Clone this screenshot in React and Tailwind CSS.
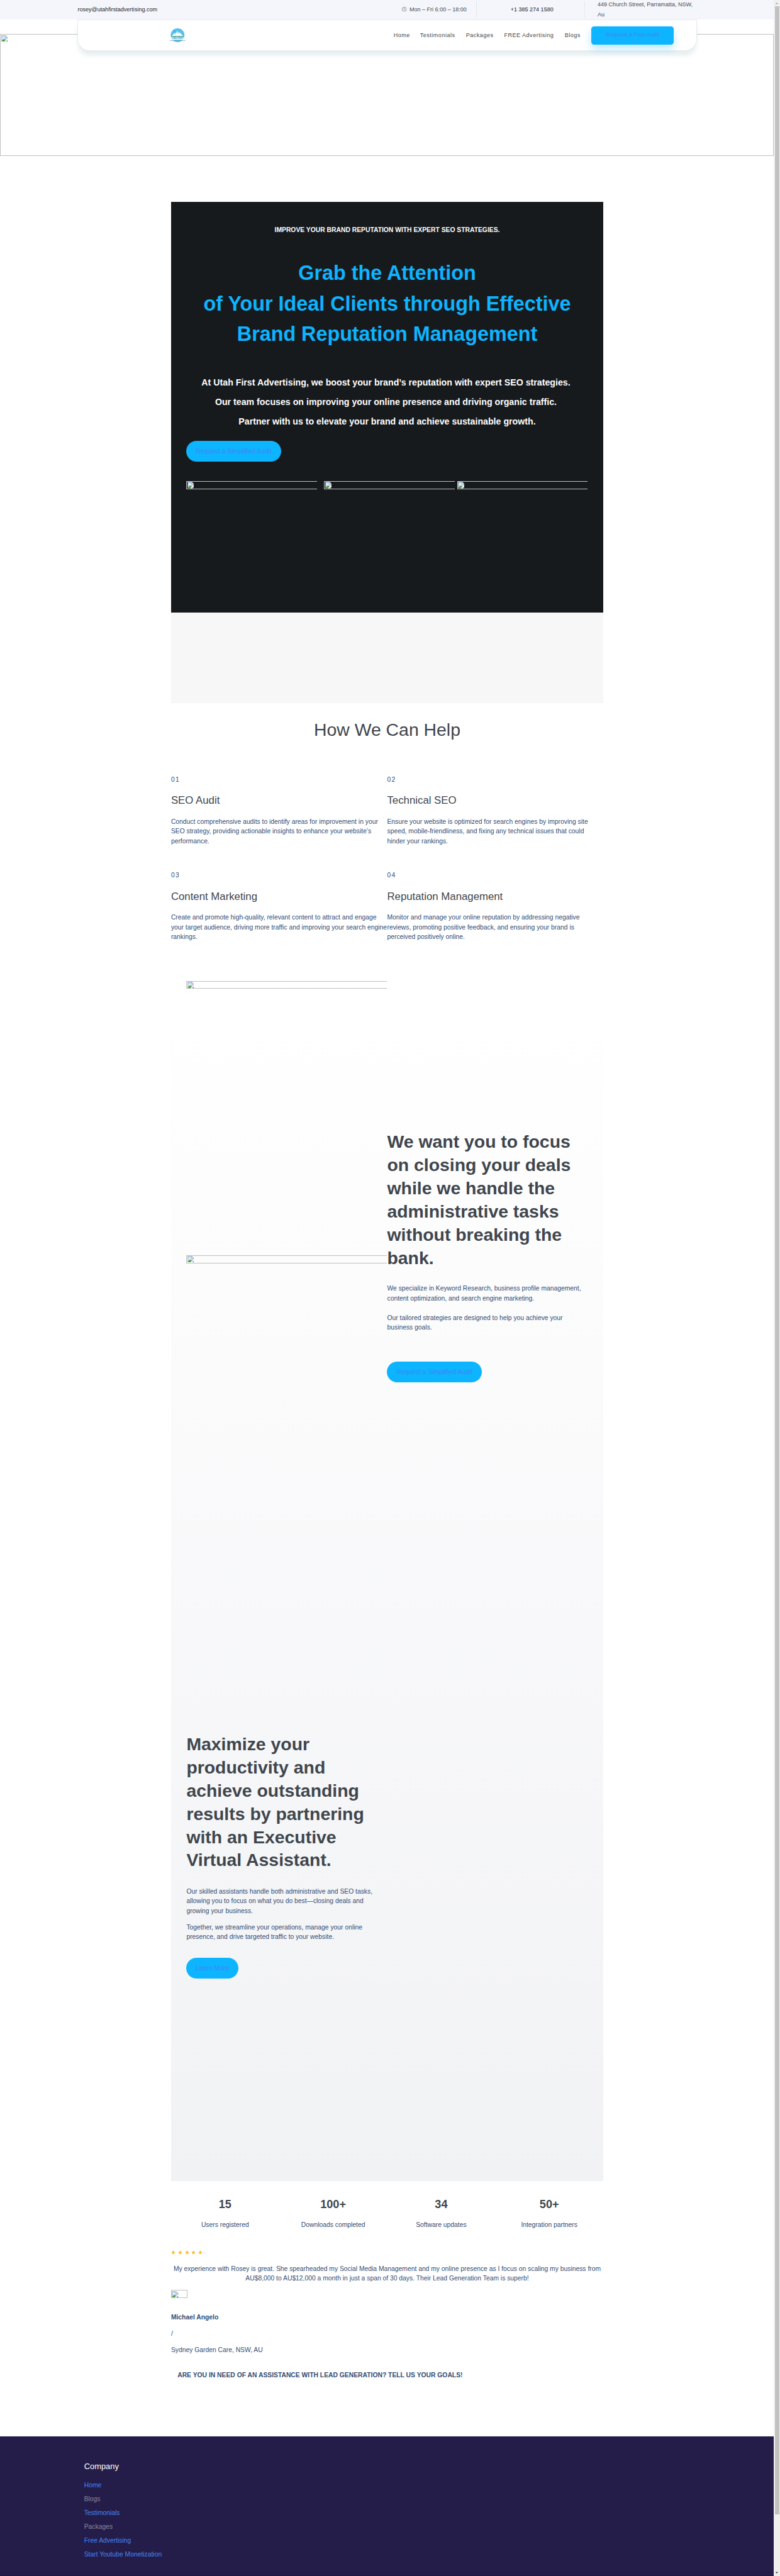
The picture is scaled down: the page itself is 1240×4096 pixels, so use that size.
function BrokenIcon() {
  return (
    <svg viewBox="0 0 16 16" className="block size-[10.3px] shrink-0">
      <path d="M.5.5h10L15.500 5.500v10H.5z" fill="#c4d5f7" stroke="#9a9a9a" />
      <path d="M2.500 7.500c0-1.500 1-2 1.800-2 .4-1.300 2.700-1.300 3.200.3 1 0 1.500.7 1.500 1.700z" fill="#fff" />
      <path d="M1 15c1-3 4-5 6-5s3 .8 3.500 1.500L7 15z" fill="#46a22b" />
      <path d="M10.500.5v5h5z" fill="#fff" stroke="#9a9a9a" />
      <path d="M7.500 16.200L16.200 8v4.500L11.500 16.200z" fill="#fff" />
      <path d="M11.500 15.500l4-3.500v3.500z" fill="#46a22b" />
    </svg>
  );
}

function BrokenImage({ className = "" }) {
  return (
    <div className={`box-border border-[#c0c0c0] pt-[0.7px] pl-[0.6px] ${className}`}>
      <BrokenIcon />
    </div>
  );
}

function Logo() {
  return (
    <svg viewBox="0 0 38 34" className="block h-[22px] w-[24.600px]">
      <circle cx="19" cy="17" r="17" fill="#55c1f0" />
      <path d="M4 20L11 12l2 2 5-7 4 5 2-2 10 10z" fill="#fff" />
      <path d="M15 10l3-3 3 4-2 3zM10 14l2-2 1 4z" fill="#bfe6f8" />
      <path d="M9 6.500l2-.8M12 7.500l2-.8" stroke="#25506b" strokeWidth="0.700" />
      <path d="M3 21l2-2.500 2 1.500 2-2 2 2 2-2 3 2 2-2 2 2 3-2 2 2 3-2 2 2 3-1.500 2 2.500z" fill="#2f8f4e" />
      <path d="M2 21.300h34v8H2z" fill="#e9f7fd" />
      <text x="19" y="25.700" textAnchor="middle" className="font-bold" fontSize="4.800" fill="#1c9fe0">UTAH FIRST</text>
      <text x="19" y="29.200" textAnchor="middle" className="font-bold" fontSize="3.300" fill="#3cc48a">ADVERTISING</text>
      <path d="M0 30.300h38" stroke="#4a86c0" strokeWidth="0.900" />
    </svg>
  );
}

function Clock() {
  return (
    <svg viewBox="0 0 12 12" className="mt-[-2.500px] block size-[7.400px]" fill="none" stroke="#444b54" strokeWidth="1">
      <circle cx="6" cy="6" r="5.300" />
      <path d="M6 3v3.300l2 1.200" />
    </svg>
  );
}

function Lines({ items, className = "" }) {
  return (
    <div className={`whitespace-nowrap ${className}`}>
      {items.map((t) => (
        <div key={t}>{t}</div>
      ))}
    </div>
  );
}

function Pill({ children, className = "" }) {
  return (
    <div className={`flex h-[32.3px] items-center justify-center rounded-full bg-[#0db4ff] text-[10.33px] whitespace-nowrap text-[#4285f4] ${className}`}>
      {children}
    </div>
  );
}

function Service({ no, title, lines }) {
  return (
    <div className="w-[343.6px]">
      <div className="text-[10.33px] leading-[15.5px] tracking-[1.3px]">{no}</div>
      <h3 className="mt-[16.1px] text-[16.8px] leading-[20px] whitespace-nowrap text-[#40464d]">{title}</h3>
      <Lines className="mt-[15.4px] text-[10.33px] leading-[15.5px]" items={lines} />
    </div>
  );
}

const services = [
  { no: "01", title: "SEO Audit", lines: ["Conduct comprehensive audits to identify areas for improvement in your", "SEO strategy, providing actionable insights to enhance your website’s", "performance."] },
  { no: "02", title: "Technical SEO", lines: ["Ensure your website is optimized for search engines by improving site", "speed, mobile-friendliness, and fixing any technical issues that could", "hinder your rankings."] },
  { no: "03", title: "Content Marketing", lines: ["Create and promote high-quality, relevant content to attract and engage", "your target audience, driving more traffic and improving your search engine", "rankings."] },
  { no: "04", title: "Reputation Management", lines: ["Monitor and manage your online reputation by addressing negative", "reviews, promoting positive feedback, and ensuring your brand is", "perceived positively online."] },
];

const stats = [
  ["15", "Users registered"],
  ["100+", "Downloads completed"],
  ["34", "Software updates"],
  ["50+", "Integration partners"],
];

const footerLinks = [
  ["Home", "text-[#4285f4]"],
  ["Blogs", "text-[#8b8799]"],
  ["Testimonials", "text-[#4285f4]"],
  ["Packages", "text-[#8b8799]"],
  ["Free Advertising", "text-[#4285f4]"],
  ["Start Youtube Monetization", "text-[#4285f4]"],
];

function TopBar() {
  return (
    <div className="flex h-[31px] items-center bg-[#f5f6fb] pl-[123.4px] text-[9.04px] whitespace-nowrap text-[#444b54]">
      <div className="w-[515.7px] text-[#212529]">rosey@utahfirstadvertising.com</div>
      <div className="flex h-[24.6px] w-[118.900px] items-center gap-[4.500px] border-r border-[#e6e8ec]">
        <Clock />
        Mon – Fri 6:00 – 18:00
      </div>
      <div className="flex h-[24.6px] w-[172px] items-center border-r border-[#e6e8ec] pl-[53.700px] text-[#212529]">+1 385 274 1580</div>
      <div className="pl-[20px] leading-[15.500px]">
        449 Church Street, Parramatta, NSW,
        <br />
        Au
      </div>
    </div>
  );
}

function Header() {
  return (
    <header className="relative ml-[123.4px] flex h-[50.4px] w-[984.200px] items-center rounded-b-[19px] border border-[#e7ebed] bg-white shadow-[0_8px_7px_-1px_rgba(20,90,110,0.1)]">
      <div className="ml-[146.100px] w-[355.300px]">
        <Logo />
      </div>
      <nav className="flex items-center text-[9.04px] tracking-[0.5px] whitespace-nowrap text-[#40464d]">
        <span className="w-[42px] pt-[1px]">Home</span>
        <span className="w-[73px] pt-[1px]">Testimonials</span>
        <span className="w-[60.700px] pt-[1px]">Packages</span>
        <span className="w-[96.200px] pt-[1px]">FREE Advertising</span>
        <span className="w-[42.600px] pt-[1px]">Blogs</span>
        <span className="flex h-[29px] w-[131.100px] items-center justify-center rounded-[4.500px] bg-[#0db4ff] tracking-normal text-[#4285f4] shadow-[0_6px_13px_rgba(13,180,255,0.3)]">Request a Free Audit</span>
      </nav>
    </header>
  );
}

function Hero() {
  return (
    <section className="flex h-[653.500px] flex-col bg-[#171a1d] px-[24.500px] pt-[37.200px] text-center font-bold whitespace-nowrap text-white">
      <p className="text-[10.33px] leading-[16px]">IMPROVE YOUR BRAND REPUTATION WITH EXPERT SEO STRATEGIES.</p>
      <Lines
        className="mt-[36px] text-[32.300px] leading-[48.440px] text-[#0db4ff]"
        items={["Grab the Attention", "of Your Ideal Clients through Effective", "Brand Reputation Management"]}
      />
      <Lines
        className="mt-[37.900px] pr-[4px] text-[14.200px] leading-[31px]"
        items={[
          "At Utah First Advertising, we boost your brand’s reputation with expert SEO strategies.",
          "Our team focuses on improving your online presence and driving organic traffic.",
        ]}
      />
      <p className="text-[14.200px] leading-[31px]">Partner with us to elevate your brand and achieve sustainable growth.</p>
      <Pill className="mt-[15px] w-[150.500px] font-normal">Request a Simplified Audit</Pill>
      <div className="mt-[30.900px] flex">
        <BrokenImage className="h-[13.200px] w-[207.500px] border-y border-l" />
        <BrokenImage className="ml-[11.500px] h-[13.200px] w-[207.500px] border-y border-l" />
        <BrokenImage className="ml-[3.700px] h-[13.200px] w-[207.500px] border-y border-l" />
      </div>
    </section>
  );
}

function Features() {
  return (
    <section className="h-[1895.600px] bg-linear-to-b from-white to-[#f1f2f4]">
      <div className="flex pt-[224.700px]">
        <div className="w-[343.600px] pt-[198.500px] pl-[24.500px]">
          <BrokenImage className="h-[13.200px] border-y border-l" />
        </div>
        <div>
          <Lines
            className="text-[28.400px] leading-[36.940px] font-bold text-[#40464d]"
            items={["We want you to focus", "on closing your deals", "while we handle the", "administrative tasks", "without breaking the", "bank."]}
          />
          <Lines
            className="mt-[22.800px] text-[10.33px] leading-[15.500px]"
            items={["We specialize in Keyword Research, business profile management,", "content optimization, and search engine marketing."]}
          />
          <Lines
            className="mt-[15.400px] text-[10.33px] leading-[15.500px]"
            items={["Our tailored strategies are designed to help you achieve your", "business goals."]}
          />
          <Pill className="mt-[46.500px] w-[150.500px]">Request a Simplified Audit</Pill>
        </div>
      </div>
      <div className="pt-[557.200px] pl-[24.500px]">
        <Lines
          className="text-[28.400px] leading-[36.940px] font-bold text-[#40464d]"
          items={["Maximize your", "productivity and", "achieve outstanding", "results by partnering", "with an Executive", "Virtual Assistant."]}
        />
        <Lines
          className="mt-[23.300px] text-[10.33px] leading-[15.500px]"
          items={["Our skilled assistants handle both administrative and SEO tasks,", "allowing you to focus on what you do best—closing deals and", "growing your business."]}
        />
        <Lines
          className="mt-[10.300px] text-[10.33px] leading-[15.500px]"
          items={["Together, we streamline your operations, manage your online", "presence, and drive targeted traffic to your website."]}
        />
        <Pill className="mt-[25.800px] w-[82.700px]">Learn More</Pill>
      </div>
    </section>
  );
}

function Testimonial() {
  return (
    <section className="text-[10.33px] leading-[15.500px] whitespace-nowrap">
      <div className="mt-[30.700px] flex h-[10px] items-center gap-[3.700px] pl-[0.600px]">
        {[0, 1, 2, 3, 4].map((i) => (
          <svg key={i} viewBox="0 0 20 20" className="block size-[6.900px]" fill="#fdb714">
            <path d="M10 0l2.500 7.200H20l-6.100 4.600 2.300 7.700L10 15l-6.200 4.500 2.300-7.700L0 7.200h7.500z" />
          </svg>
        ))}
      </div>
      <Lines
        className="mt-[13.600px] text-center"
        items={[
          "My experience with Rosey is great. She spearheaded my Social Media Management and my online presence as I focus on scaling my business from",
          "AU$8,000 to AU$12,000 a month in just a span of 30 days. Their Lead Generation Team is superb!",
        ]}
      />
      <BrokenImage className="mt-[10.100px] h-[13.200px] w-[26px] border" />
      <p className="mt-[23.200px] font-bold">Michael Angelo</p>
      <p className="mt-[10.300px]">/</p>
      <p className="mt-[10.300px]">Sydney Garden Care, NSW, AU</p>
      <p className="mt-[24.500px] ml-[10.300px] font-bold">ARE YOU IN NEED OF AN ASSISTANCE WITH LEAD GENERATION? TELL US YOUR GOALS!</p>
    </section>
  );
}

function Footer() {
  return (
    <footer className="mt-[89.700px] h-[221.600px] border-b border-[#1d1640] bg-[#251d49] pt-[37.500px] pl-[133.700px]">
      <h4 className="text-[12.900px] leading-[20px] text-white">Company</h4>
      <ul className="mt-[9.300px] text-[10.33px] leading-[22px]">
        {footerLinks.map(([label, tone]) => (
          <li key={label} className={tone}>{label}</li>
        ))}
      </ul>
    </footer>
  );
}

function Scrollbar() {
  return (
    <div className="flex h-[4096px] w-[9.700px] shrink-0 flex-col items-center bg-[#f0f0f0]">
      <svg viewBox="0 0 15 15" className="block size-[9.700px] shrink-0" fill="#a3a3a3"><path d="M4 10l3.500-4 3.500 4z" /></svg>
      <div className="h-[3988.300px] w-[7.100px] shrink-0 bg-[#c1c1c1]" />
      <div className="grow" />
      <svg viewBox="0 0 15 15" className="block size-[9.700px] shrink-0" fill="#505050"><path d="M4 5.500h7L7.500 9.500z" /></svg>
    </div>
  );
}

export default function App() {
  return (
    <div className="flex h-[4096px] w-[1240px] overflow-hidden bg-white font-['Liberation_Sans',Arial,sans-serif] text-[#334d75]">
      <div className="w-[1230.300px] shrink-0">
        <TopBar />
        <Header />
        <BrokenImage className="mt-[-27.100px] h-[193.700px] border" />
        <main className="mt-[73px] ml-[271.900px] w-[687.200px]">
          <Hero />
          <div className="h-[143.500px] bg-[#f7f7f7]" />
          <h2 className="mt-[22.100px] text-center text-[28.400px] leading-[40px] text-[#40464d]">How We Can Help</h2>
          <div className="mt-[51.800px] grid grid-cols-2 gap-y-[38.900px]">
            {services.map((s) => (
              <Service key={s.no} {...s} />
            ))}
          </div>
          <div className="mt-[61.900px] w-[343.600px] pl-[24.500px]">
            <BrokenImage className="h-[12.700px] border-y border-l" />
          </div>
          <Features />
          <div className="grid grid-cols-4 pt-[25.100px] text-center">
            {stats.map(([n, label]) => (
              <div key={label}>
                <div className="text-[18.100px] leading-[24px] font-bold text-[#40464d]">{n}</div>
                <div className="mt-[13.200px] text-[10.33px] leading-[15.500px]">{label}</div>
              </div>
            ))}
          </div>
          <Testimonial />
        </main>
        <Footer />
      </div>
      <Scrollbar />
    </div>
  );
}
